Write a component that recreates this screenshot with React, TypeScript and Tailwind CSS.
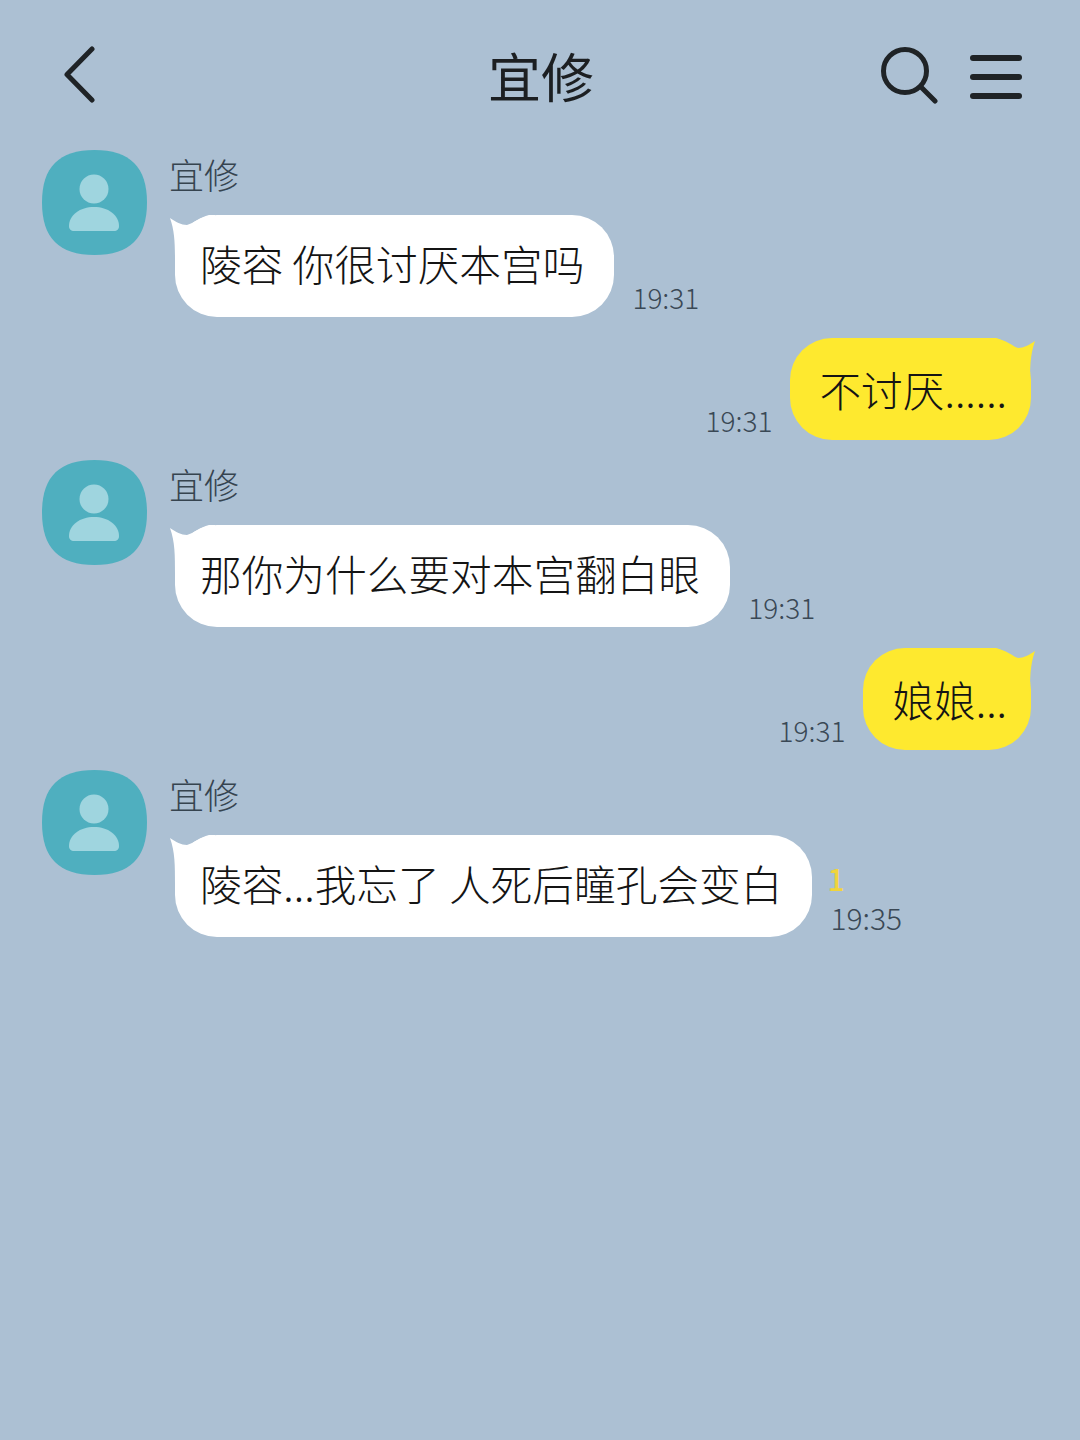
const fontStack = '"Noto Sans CJK SC", "Noto Sans", sans-serif';

function Tail({ side, fill }: { side: 'left' | 'right'; fill: string }) {
  if (side === 'left') {
    return (
      <svg className="absolute left-[-6px] top-0" width="46" height="50" viewBox="0 0 46 50">
        <path d="M1 3 C7 7 12 10 18 10 C25 8 31 2 40 0 L46 0 L46 50 L6 50 C6 30 6 17 1 3Z" fill={fill} />
      </svg>
    );
  }
  return (
    <svg className="absolute right-[-5px] top-0" width="46" height="50" viewBox="0 0 46 50">
      <path d="M45 3 C39 7 34 10 28 10 C21 8 15 2 6 0 L0 0 L0 50 L40 50 C40 30 40 17 45 3Z" fill={fill} />
    </svg>
  );
}

function Avatar() {
  return (
    <svg className="shrink-0" width="105" height="105" viewBox="0 0 105 105">
      <path
        d="M52.5 0 C88 0 105 17 105 52.5 C105 88 88 105 52.5 105 C17 105 0 88 0 52.5 C0 17 17 0 52.5 0Z"
        fill="#4fafbf"
      />
      <circle cx="52" cy="39" r="14.5" fill="#9fd5df" />
      <path d="M27 76 C27 65 38 57 52 57 C66 57 77 65 77 76 C77 79.5 75 81 72 81 L32 81 C29 81 27 79.5 27 76Z" fill="#9fd5df" />
    </svg>
  );
}

function Incoming({ text, time, unread }: { text: string; time: string; unread?: boolean }) {
  return (
    <div className="flex pl-[42px]">
      <Avatar />
      <div className="ml-[22px] flex flex-col items-start">
        <div className="h-[65px] text-[35px] font-light leading-[48px] text-[#36444f]">宜修</div>
        <div className="flex items-end">
          <div className="relative ml-[6px] flex h-[102px] items-center rounded-[42px] bg-white pb-[4px] pl-[25px] pr-[30px] text-[41.7px] font-light leading-none text-[#141414] whitespace-nowrap">
            <Tail side="left" fill="#ffffff" />
            <span className="relative">{text}</span>
          </div>
          {unread ? (
            <div className="ml-[18px] flex flex-col items-start pb-[3px]">
              <span className="-ml-[3px] mb-[7px] h-[30px] text-[30px] font-medium leading-[30px] text-[#f0d43c]">1</span>
              <span className="text-[30px] font-light leading-[34px] text-[#3a4855]">{time}</span>
            </div>
          ) : (
            <span className="ml-[18px] pb-[3px] text-[28px] font-light leading-[34px] text-[#3a4855]">{time}</span>
          )}
        </div>
      </div>
    </div>
  );
}

function Outgoing({ text, time }: { text: string; time: string }) {
  return (
    <div className="flex items-end justify-end pr-[49px]">
      <span className="mr-[18px] pb-[3px] text-[28px] font-light leading-[34px] text-[#3a4855]">{time}</span>
      <div className="relative flex h-[102px] items-center rounded-[42px] bg-[#fee92f] pl-[29px] pr-[24px] pt-[2px] text-[41.7px] font-light leading-none text-[#141414] whitespace-nowrap">
        <Tail side="right" fill="#fee92f" />
        <span className="relative">{text}</span>
      </div>
    </div>
  );
}

export default function App() {
  return (
    <div className="h-[1440px] w-[1080px] overflow-hidden bg-[#acc0d3]" style={{ fontFamily: fontStack }}>
      <header className="grid h-[150px] grid-cols-[1fr_auto_1fr] items-center pl-[60px] pr-[58px]">
        <svg width="40" height="58" viewBox="0 0 40 58" fill="none" stroke="#1f2326" strokeWidth="5" strokeLinecap="round" strokeLinejoin="round">
          <path d="M32 3 L7 28.5 L32 54" />
        </svg>
        <h1 className="text-[53px] font-normal leading-none text-[#1c1f22]">宜修</h1>
        <div className="flex items-center justify-end gap-[32px]">
          <svg width="58" height="58" viewBox="0 0 58 58" fill="none" stroke="#1f2326" strokeLinecap="round">
            <circle cx="25" cy="25" r="21.5" strokeWidth="5" />
            <path d="M41 41 L55 55" strokeWidth="5" />
          </svg>
          <div className="mt-[4px] flex w-[52px] flex-col gap-[13px]">
            <span className="h-[6px] rounded-full bg-[#1f2326]" />
            <span className="h-[6px] rounded-full bg-[#1f2326]" />
            <span className="h-[6px] rounded-full bg-[#1f2326]" />
          </div>
        </div>
      </header>
      <main className="flex flex-col">
        <Incoming text="陵容 你很讨厌本宫吗" time="19:31" />
        <div className="mb-[20px] mt-[21px]">
          <Outgoing text="不讨厌......" time="19:31" />
        </div>
        <Incoming text="那你为什么要对本宫翻白眼" time="19:31" />
        <div className="mb-[20px] mt-[21px]">
          <Outgoing text="娘娘..." time="19:31" />
        </div>
        <Incoming text="陵容...我忘了 人死后瞳孔会变白" time="19:35" unread />
      </main>
    </div>
  );
}
